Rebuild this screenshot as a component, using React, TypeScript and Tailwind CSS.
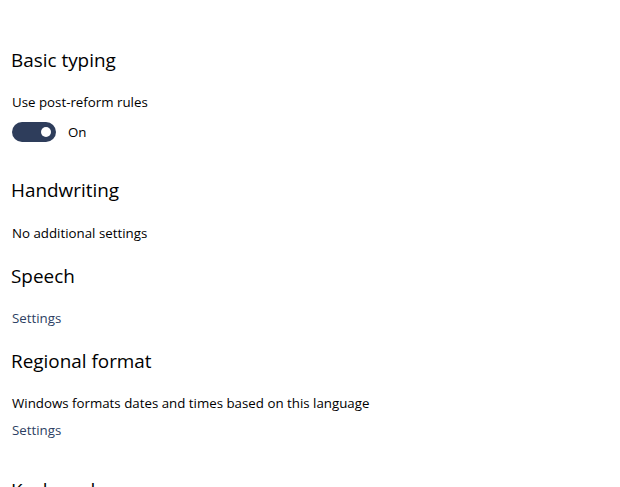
import React from "react"

function Heading({ children, className = "" }: { children: React.ReactNode; className?: string }) {
  return <h2 className={`h-[28px] text-[18.9px] leading-[28px] text-[#000] -ml-[1px] ${className}`}>{children}</h2>
}

function Text({ children, className = "" }: { children: React.ReactNode; className?: string }) {
  return <p className={`h-[20px] text-[13.3px] leading-[20px] text-[#000] ${className}`}>{children}</p>
}

function Link({ children, className = "" }: { children: React.ReactNode; className?: string }) {
  return <a className={`block h-[20px] text-[13.3px] leading-[20px] text-[#2d3f63] ${className}`}>{children}</a>
}

export default function App() {
  return (
    <div className="w-[620px] h-[487px] overflow-hidden bg-white pl-3 pt-[46px] font-['Open_Sans',sans-serif]">
      <Heading>Basic typing</Heading>
      <Text className="mt-[18px]">Use post-reform rules</Text>
      <div className="mt-[10px] flex items-center gap-3">
        <div className="flex h-[20px] w-[44px] items-center justify-end rounded-full bg-[#2e3d5b] pr-[5px]">
          <div className="h-[10px] w-[10px] rounded-full bg-white" />
        </div>
        <span className="text-[13.3px] leading-[20px] text-[#000]">On</span>
      </div>
      <Heading className="mt-[34px]">Handwriting</Heading>
      <Text className="mt-[19px]">No additional settings</Text>
      <Heading className="mt-[19px]">Speech</Heading>
      <Link className="mt-[18px]">Settings</Link>
      <Heading className="mt-[19px]">Regional format</Heading>
      <Text className="mt-[18px]">Windows formats dates and times based on this language</Text>
      <Link className="mt-[7px]">Settings</Link>
      <Heading className="mt-[36px]">Keyboards</Heading>
    </div>
  )
}
